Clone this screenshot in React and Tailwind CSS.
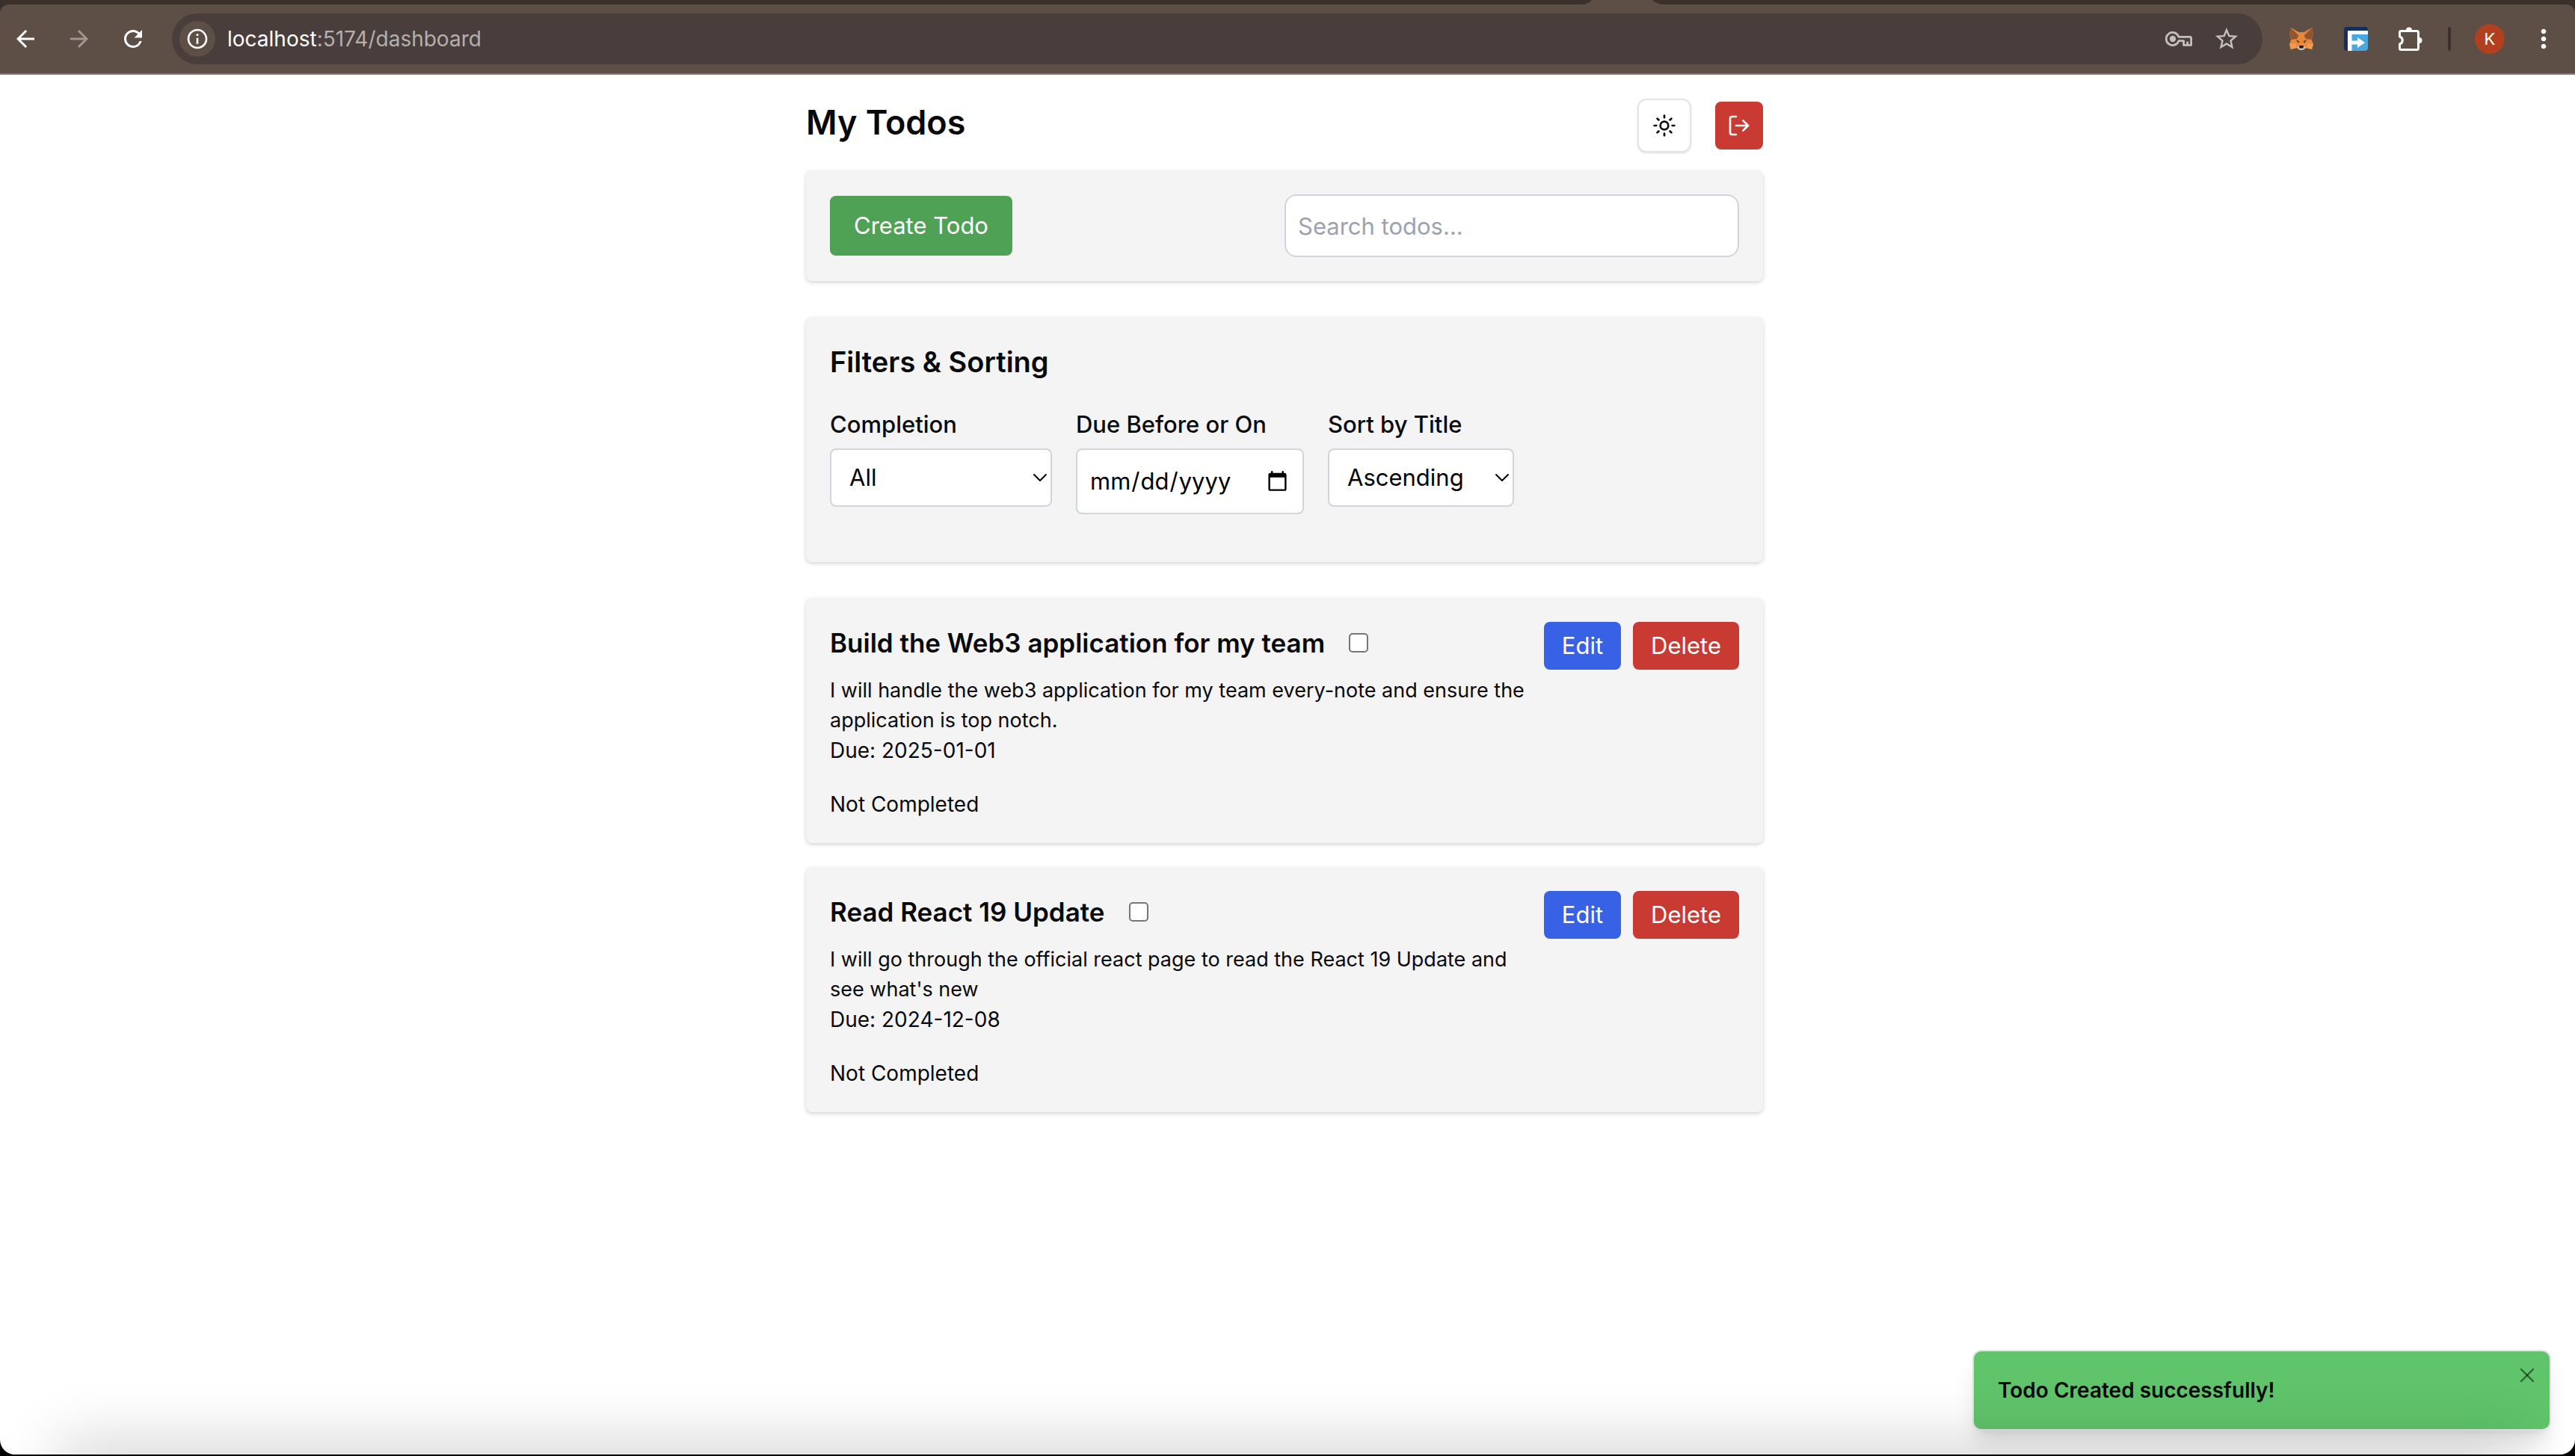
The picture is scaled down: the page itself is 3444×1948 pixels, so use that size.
import { Sun, LogOut, X, ChevronDown } from "lucide-react";
import { MdArrowBack, MdArrowForward, MdRefresh, MdOutlineInfo, MdStarBorder, MdMoreVert } from "react-icons/md";

const todos = [
  {
    id: "web3",
    title: "Build the Web3 application for my team",
    description:
      "I will handle the web3 application for my team every-note and ensure the application is top notch.",
    due: "2025-01-01",
  },
  {
    id: "react",
    title: "Read React 19 Update",
    description:
      "I will go through the official react page to read the React 19 Update and see what's new",
    due: "2024-12-08",
  },
];

function KeyIcon() {
  return (
    <svg viewBox="0 0 36 20" className="h-5 w-9" fill="none" stroke="currentColor" strokeWidth="2.8" strokeLinejoin="round" aria-hidden="true">
      <path d="M18 7.4 A8.6 8.6 0 1 0 18 12.6 H24.6 V18.4 H34.6 V9 Q34.6 7.4 33 7.4 Z" />
      <path d="M29.6 18 V13.6" />
      <circle cx="10" cy="10" r="4.2" fill="currentColor" stroke="none" />
    </svg>
  );
}

function PuzzleIcon() {
  return (
    <svg viewBox="0 0 32 32" className="size-8" aria-hidden="true">
      <path
        d="M3.5 5.5 H24.5 Q26.5 5.5 26.5 7.5 V28.5 Q26.5 30.5 24.5 30.5 H3.5 Q1.5 30.5 1.5 28.5 V23 A5.2 5.2 0 0 0 1.5 13 V7.5 Q1.5 5.5 3.5 5.5 Z"
        fill="none"
        stroke="currentColor"
        strokeWidth="3"
        strokeLinejoin="round"
      />
      <path d="M10 4.5 A4 4 0 0 1 18 4.5 Z M27.5 14 A4 4 0 0 1 27.5 22 Z" fill="currentColor" />
    </svg>
  );
}

function FoxIcon() {
  return (
    <svg viewBox="0 0 32 32" className="size-8" aria-hidden="true">
      <path d="M2 1 L12 7 H20 L30 1 L32 10 L29.500 17 L32 23 L30 30 L22 28 L18 31 H14 L10 28 L2 30 L0 23 L2.500 17 L0 10 Z" fill="#e8883a" />
      <path d="M2 1 L13 10 L10 16 L3 17 L0 10 Z M30 1 L19 10 L22 16 L29 17 L32 10 Z" fill="#8f5630" />
      <path d="M2 1 L12 7 H20 L30 1 L19 12 H13 Z" fill="#e8883a" />
      <path d="M2 30 L10 28 L8 22 L0 23 Z M30 30 L22 28 L24 22 L32 23 Z" fill="#f09a50" />
      <path d="M8.500 17 L13.500 19.500 L12 21.500 Z M23.500 17 L18.500 19.500 L20 21.500 Z" fill="#3a3434" />
      <path d="M10 28 L13 25 H19 L22 28 L18 31 H14 Z" fill="#d0c2b6" />
      <path d="M13 25 H19 L18.500 28.500 H13.500 Z" fill="#161616" />
    </svg>
  );
}

function ForwardBadgeIcon() {
  return (
    <svg viewBox="0 0 32 32" className="size-8" aria-hidden="true">
      <rect width="32" height="32" rx="4" fill="#12305f" />
      <path d="M10 10 H32 V28 a4 4 0 0 1 -4 4 H10 Z" fill="#4aa8e0" />
      <path d="M5 5 H32 V10 H10.500 V32 H5 Z" fill="#ffffff" />
      <path d="M10 18.500 H18 V14 L28 21 L18 28 V23.500 H10 Z" fill="#ffffff" />
    </svg>
  );
}

function BrowserBar() {
  return (
    <div className="bg-[#3a302c]">
      <div className="flex h-[6px] justify-end pr-[1218px]" aria-hidden="true">
        <svg viewBox="0 0 112 6" className="h-[6px] w-[112px]">
          <path d="M0 6 Q10 6 15 0 H96 Q102 6 112 6 Z" fill="#5d4f46" />
        </svg>
      </div>
      <div className="flex h-[94px] items-center rounded-t-xl border-b-2 border-[#8a776f] bg-[#5d4f46] py-3 pr-[22px] pl-4 text-white">
        <div className="flex items-center gap-9">
          <button type="button" aria-label="Back"><MdArrowBack className="size-9" /></button>
          <button type="button" aria-label="Forward" className="text-[#a0958f]"><MdArrowForward className="size-9" /></button>
          <button type="button" aria-label="Reload"><MdRefresh className="size-9" /></button>
        </div>
        <div className="ml-[34px] flex h-[68px] flex-1 items-center rounded-full bg-[#4a3e3c] pr-[30px] pl-[10px]">
          <button type="button" aria-label="Site information" className="flex size-12 items-center justify-center rounded-full bg-[#5d4f46]">
            <MdOutlineInfo className="size-8" />
          </button>
          <div className="ml-4 flex-1 text-[28px] leading-10">
            localhost<span className="text-[#b5afac]">:5174/dashboard</span>
          </div>
          <div className="flex items-center gap-7 text-[#c3bfbd]">
            <button type="button" aria-label="Passwords"><KeyIcon /></button>
            <button type="button" aria-label="Bookmark"><MdStarBorder className="size-9" /></button>
          </div>
        </div>
        <div className="ml-9 flex items-center gap-[41px]">
          <button type="button" aria-label="Wallet"><FoxIcon /></button>
          <button type="button" aria-label="Forwarder"><ForwardBadgeIcon /></button>
          <button type="button" aria-label="Extensions"><PuzzleIcon /></button>
        </div>
        <div className="ml-[34px] h-8 w-1 rounded-full bg-[#3a302c]" />
        <button type="button" aria-label="Profile" className="ml-8 flex size-10 items-center justify-center rounded-full bg-[#b04020] text-[22px]">K</button>
        <button type="button" aria-label="Menu" className="ml-8"><MdMoreVert className="size-10" /></button>
      </div>
    </div>
  );
}

function Card({ className = "", children }) {
  return (
    <section className={`rounded-lg bg-[#f4f4f4] p-8 shadow-[0_2px_6px_rgba(0,0,0,0.1),0_2px_4px_rgba(0,0,0,0.08)] ${className}`}>
      {children}
    </section>
  );
}

function SelectField({ id, label, options, className }) {
  return (
    <div>
      <label htmlFor={id} className="mb-2 block font-medium">{label}</label>
      <div className={`relative ${className}`}>
        <select id={id} className="h-[78px] w-full appearance-none rounded-lg border-2 border-[#d1d5db] bg-white pl-6 text-black">
          {options.map((o) => (
            <option key={o}>{o}</option>
          ))}
        </select>
        <ChevronDown className="pointer-events-none absolute top-1/2 right-0 size-8 -translate-y-1/2 text-black" strokeWidth={1.5} />
      </div>
    </div>
  );
}

function TodoCard({ todo }) {
  return (
    <Card className="mb-8 flex items-start justify-between">
      <div className="flex-1">
        <div className="mb-4 flex h-14 items-center gap-8">
          <label htmlFor={todo.id} className="text-[35px] font-semibold">{todo.title}</label>
          <input id={todo.id} type="checkbox" className="size-[26px] appearance-none rounded-[5px] border-2 border-[#767676] bg-white" />
        </div>
        <p className="text-[27px] leading-10">{todo.description}</p>
        <p className="mb-8 text-[28px] leading-10">Due: {todo.due}</p>
        <p className="text-[28px] leading-10">Not Completed</p>
      </div>
      <div className="flex gap-4 text-white">
        <button type="button" className="h-16 rounded-lg bg-[#3862e5] px-6">Edit</button>
        <button type="button" className="h-16 rounded-lg bg-[#c93a32] px-6">Delete</button>
      </div>
    </Card>
  );
}

export default function App() {
  return (
    <div className="flex min-h-screen flex-col bg-black font-['Inter',sans-serif] text-[31px] leading-[48px] text-[#09090b]">
      <BrowserBar />
      <div className="relative mb-[2px] flex-1 overflow-hidden rounded-b-[20px] bg-white pr-2">
        <main className="mx-auto max-w-[1280px] pt-8">
          <header className="mb-6 flex items-start justify-between">
            <h1 className="text-[45px] leading-[64px] font-semibold">My Todos</h1>
            <div className="flex items-center gap-8">
              <button type="button" aria-label="Toggle theme" className="flex size-[72px] items-center justify-center rounded-xl border-2 border-[#e4e4e7] bg-white shadow-sm">
                <Sun className="size-8" />
              </button>
              <button type="button" aria-label="Log out" className="flex size-16 items-center justify-center rounded-lg bg-[#c93a32] text-white">
                <LogOut className="size-8" />
              </button>
            </div>
          </header>

          <Card className="mb-12 flex items-center justify-between">
            <button type="button" className="h-20 rounded-lg bg-[#4fa155] px-8 text-white">Create Todo</button>
            <input type="text" aria-label="Search todos" placeholder="Search todos..." className="h-[84px] w-1/2 rounded-2xl border-2 border-[#d1d5db] bg-white px-4 placeholder:text-[#9ca3af]" />
          </Card>

          <Card className="mb-12">
            <h2 className="mb-8 text-[38px] leading-[56px] font-semibold">Filters &amp; Sorting</h2>
            <div className="mb-8 flex items-start gap-8">
              <SelectField id="completion" label="Completion" options={["All", "Completed", "Not Completed"]} className="w-[297px]" />
              <div>
                <label htmlFor="due" className="mb-2 block font-medium">Due Before or On</label>
                <input id="due" type="date" className="h-[88px] w-[305px] rounded-lg border-2 border-[#d1d5db] bg-white px-4 text-black" />
              </div>
              <SelectField id="sort" label="Sort by Title" options={["Ascending", "Descending"]} className="w-[249px]" />
            </div>
          </Card>

          {todos.map((t) => (
            <TodoCard key={t.id} todo={t} />
          ))}
        </main>

        <div role="status" className="absolute right-8 bottom-8 flex h-[108px] w-[774px] items-center rounded-xl border-2 border-[#e4e4e7] bg-[#5fc46a] px-8 text-[28px] font-semibold shadow-[0_20px_30px_-6px_rgba(0,0,0,0.12),0_8px_12px_-8px_rgba(0,0,0,0.1)]">
          Todo Created successfully!
          <button type="button" aria-label="Close" className="absolute top-4 right-[14px] text-black/50">
            <X className="size-8" strokeWidth={1.8} />
          </button>
        </div>
        <div className="pointer-events-none absolute inset-x-24 -bottom-10 h-10 shadow-[0_0_80px_20px_rgba(0,0,0,0.16)]" />
      </div>
    </div>
  );
}
